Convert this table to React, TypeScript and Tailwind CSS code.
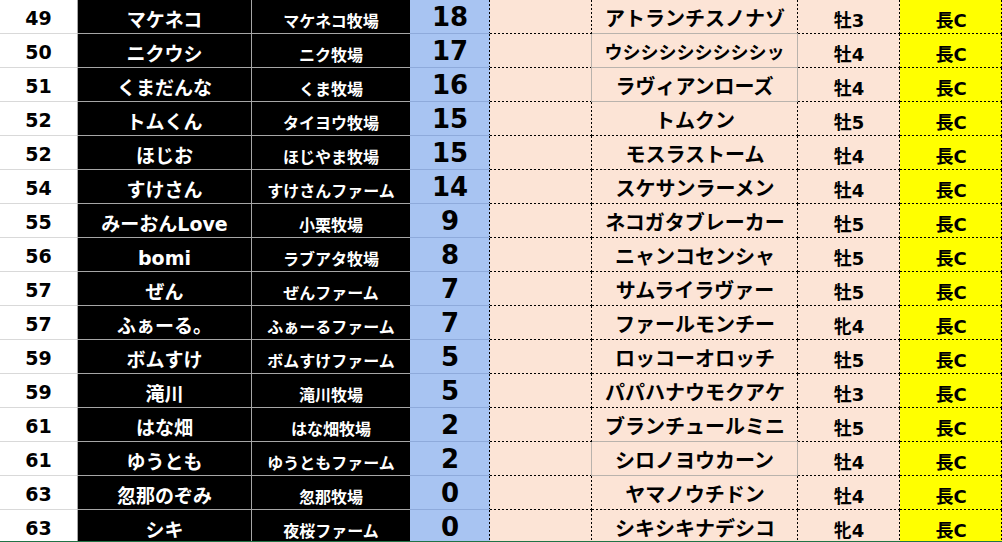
const rows: [string, string, string, string, string, string, string][] = [
  ['49', 'マケネコ', 'マケネコ牧場', '18', 'アトランチスノナゾ', '牡3', '長C'],
  ['50', 'ニクウシ', 'ニク牧場', '17', 'ウシシシシシシシシッ', '牡4', '長C'],
  ['51', 'くまだんな', 'くま牧場', '16', 'ラヴィアンローズ', '牡4', '長C'],
  ['52', 'トムくん', 'タイヨウ牧場', '15', 'トムクン', '牡5', '長C'],
  ['52', 'ほじお', 'ほじやま牧場', '15', 'モスラストーム', '牡4', '長C'],
  ['54', 'すけさん', 'すけさんファーム', '14', 'スケサンラーメン', '牡4', '長C'],
  ['55', 'みーおんLove', '小栗牧場', '9', 'ネコガタブレーカー', '牡5', '長C'],
  ['56', 'bomi', 'ラブアタ牧場', '8', 'ニャンコセンシャ', '牡5', '長C'],
  ['57', 'ぜん', 'ぜんファーム', '7', 'サムライラヴァー', '牡5', '長C'],
  ['57', 'ふぁーる。', 'ふぁーるファーム', '7', 'ファールモンチー', '牝4', '長C'],
  ['59', 'ボムすけ', 'ボムすけファーム', '5', 'ロッコーオロッチ', '牡5', '長C'],
  ['59', '滝川', '滝川牧場', '5', 'パパハナウモクアケ', '牡3', '長C'],
  ['61', 'はな畑', 'はな畑牧場', '2', 'ブランチュールミニ', '牡5', '長C'],
  ['61', 'ゆうとも', 'ゆうともファーム', '2', 'シロノヨウカーン', '牡4', '長C'],
  ['63', '忽那のぞみ', '忽那牧場', '0', 'ヤマノウチドン', '牡4', '長C'],
  ['63', 'シキ', '夜桜ファーム', '0', 'シキシキナデシコ', '牝4', '長C'],
]

// rows whose horse-name cell sits inside a solid grey box (1-based)
const boxed = [2, 3, 14]

// dotted Excel borders drawn as background stripes
const dashBR =
  '[background-image:linear-gradient(to_right,#000_50%,transparent_50%),linear-gradient(to_bottom,#000_50%,transparent_50%)] [background-size:4px_1px,1px_4px] [background-position:left_bottom,right_top] [background-repeat:repeat-x,repeat-y]'
const dashR =
  '[background-image:linear-gradient(to_bottom,#000_50%,transparent_50%)] [background-size:1px_4px] [background-position:right_top] [background-repeat:repeat-y]'
const dashB =
  '[background-image:linear-gradient(to_right,#000_50%,transparent_50%)] [background-size:4px_1px] [background-position:left_bottom] [background-repeat:repeat-x]'

function Row({ r, i }: { r: (typeof rows)[number]; i: number }) {
  const n = i + 1
  const box = boxed.includes(n)
  const boxBelow = boxed.includes(n + 1)
  const cell = 'h-[34px] flex items-center justify-center font-bold leading-none whitespace-nowrap'
  // long name gets shrunk to fit, like Excel does
  const horseSize = r[4].length > 9 ? 'text-[18px]' : 'text-[20px]'

  return (
    <>
      <div className={`${cell} bg-white text-black text-[19px] pt-[4px] border-b border-r border-b-[#d9d9d9] border-r-[#a8a8a8]`}>
        {r[0]}
      </div>
      <div className={`${cell} bg-black text-white text-[19px] pt-[8px] border-b border-r border-[#a6a6a6]`}>
        {r[1]}
      </div>
      <div className={`${cell} bg-black text-white text-[16px] pt-[11px] border-b border-[#a6a6a6]`}>
        {r[2]}
      </div>
      <div className={`${cell} bg-[#a8c4f2] text-black text-[26px] pt-px border-b border-[#8eaadb] ${dashR}`}>
        {r[3]}
      </div>
      {box ? (
        <div className={`${cell} bg-[#fce4d6] border-r border-[#b9b3ad] ${dashB}`} />
      ) : (
        <div className={`${cell} bg-[#fce4d6] ${dashBR}`} />
      )}
      {box || boxBelow ? (
        <div
          className={`${cell} ${horseSize} bg-[#fce4d6] text-black pt-[4px] border-b border-[#b9b3ad] ${box ? 'border-r' : dashR}`}
        >
          {r[4]}
        </div>
      ) : (
        <div className={`${cell} ${horseSize} bg-[#fce4d6] text-black pt-[4px] ${dashBR}`}>{r[4]}</div>
      )}
      <div className={`${cell} bg-[#fce4d6] text-black text-[18px] pt-[8px] ${dashBR}`}>{r[5]}</div>
      <div className={`${cell} bg-[#ffff00] text-black text-[18px] pt-[8px] ${dashBR}`}>{r[6]}</div>
    </>
  )
}

export default function App() {
  return (
    <div className="w-[1002px] h-[542px] flex flex-col bg-white overflow-hidden [font-family:'DejaVu_Sans','Noto_Sans_CJK_JP',sans-serif]">
      <div className="flex-1 overflow-hidden">
        <div className="grid grid-cols-[78px_174px_158px_80px_102px_206px_102px_102px]">
          {rows.map((r, i) => (
            <Row key={i} r={r} i={i} />
          ))}
        </div>
      </div>
      <div className="h-px bg-[#217346]" />
    </div>
  )
}
